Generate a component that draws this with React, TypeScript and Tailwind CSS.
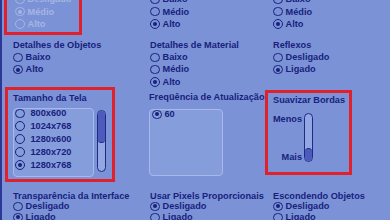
import React from "react"

const NAVY = "text-[#18217d]"

function Radio({ on = false, dim = false }: { on?: boolean; dim?: boolean }) {
  return (
    <span
      className={`flex h-[9.5px] w-[9.5px] shrink-0 items-center justify-center rounded-full border-[1.8px] ${
        dim ? "border-[#a7b5e4]" : "border-[#18217d]"
      }`}
    >
      {on && <span className={`h-[4px] w-[4px] rounded-full ${dim ? "bg-[#a7b5e4]" : "bg-[#18217d]"}`} />}
    </span>
  )
}

function Option({ label, on, dim, tight }: { label: string; on?: boolean; dim?: boolean; tight?: boolean }) {
  return (
    <div className={`flex items-center gap-[3px] ${tight ? "h-[11px]" : "h-[12.3px]"}`}>
      <Radio on={on} dim={dim} />
      <span className={dim ? "text-[#a7b5e4]" : NAVY}>{label}</span>
    </div>
  )
}

function Group({ title, options, selected, tight }: { title: string; options: string[]; selected: number; tight?: boolean }) {
  return (
    <div>
      <div className={`${tight ? "h-[11px]" : "h-[12.3px]"} leading-[12.3px] whitespace-nowrap`}>{title}</div>
      {options.map((o, i) => (
        <Option key={o} label={o} on={i === selected} tight={tight} />
      ))}
    </div>
  )
}

const resolutions = ["800x600", "1024x768", "1280x600", "1280x720", "1280x768"]

export default function App() {
  return (
    <div className="h-[220px] w-[390px] overflow-hidden border-l-2 border-[#2b3896] bg-[#7b93d6] font-['Liberation_Sans',Arial,sans-serif] text-[9.2px] font-bold leading-[12.3px] text-[#18217d]">
      <div className="-mt-[6.8px] pl-[11px]">
        {/* first row, half cut off */}
        <div className="grid grid-cols-[137px_123px_1fr]">
          <div className="-ml-[9px] -mt-[3px] w-[78px] border-[3px] border-[#e0202a] pb-[2px] pl-[8px]">
            <Option label="Desligado" dim />
            <Option label="Médio" on dim />
            <Option label="Alto" dim />
          </div>
          <div>
            <Option label="Baixo" />
            <Option label="Médio" />
            <Option label="Alto" on />
          </div>
          <div>
            <Option label="Baixo" />
            <Option label="Médio" />
            <Option label="Alto" on />
          </div>
        </div>

        <div className="mt-[3.75px] grid h-[48px] grid-cols-[137px_123px_1fr]">
          <Group title="Detalhes de Objetos" options={["Baixo", "Alto"]} selected={1} />
          <Group title="Detalhes de Material" options={["Baixo", "Médio", "Alto"]} selected={2} />
          <Group title="Reflexos" options={["Desligado", "Ligado"]} selected={1} />
        </div>

        <div className="grid h-[103px] grid-cols-[137px_123px_1fr] items-start">
          {/* Tamanho da Tela */}
          <div className="-ml-[8px] mt-[0.15px] w-[110px] border-[3px] border-[#e0202a] pb-[2px] pl-[5px] pr-[6px] pt-[1.85px]">
            <div className="h-[12.3px] whitespace-nowrap">Tamanho da Tela</div>
            <div className="mt-[3.85px] flex items-start">
              <div className="h-[69px] w-[81px] overflow-hidden rounded-[4px] border border-[#a9b8ea] bg-[#869ddc] pl-[1px]">
                <div className="-mt-[2px]">
                  {resolutions.map((r, i) => (
                    <div key={r} className="flex h-[12.85px] items-center gap-[6px]">
                      <Radio on={i === 4} />
                      <span>{r}</span>
                    </div>
                  ))}
                </div>
              </div>
              <div className="ml-[3px] mt-[2px] flex h-[62px] w-[9px] flex-col overflow-hidden rounded-full border-[1.5px] border-[#1e2a86] bg-[#93a7e2]">
                <div className="h-[32px] rounded-full border-b-[1.5px] border-[#1e2a86] bg-[#4d5cbc]" />
              </div>
            </div>
          </div>

          {/* Frequencia */}
          <div className="-ml-[1px] pt-[4px]">
            <div className="h-[12.3px] whitespace-nowrap">Freqüência de Atualização</div>
            <div className="mt-[5.85px] h-[67px] w-[74px] rounded-[4px] border border-[#a9b8ea] bg-[#869ddc] pl-[2px]">
              <div className="-mt-[2px] flex h-[12.85px] items-center gap-[3px]">
                <Radio on />
                <span>60</span>
              </div>
            </div>
          </div>

          {/* Suavizar Bordas */}
          <div className="-ml-[8px] mt-[3.15px] h-[85px] w-[87px] border-[3px] border-[#e0202a] pl-[5px] pt-[0.85px]">
            <div className="h-[12.3px] whitespace-nowrap">Suavizar Bordas</div>
            <div className="mt-[6.7px] flex items-start">
              <div className="flex h-[50px] w-[29px] flex-col items-end justify-between">
                <span>Menos</span>
                <span>Mais</span>
              </div>
              <div className="ml-[2px] flex h-[49px] w-[9px] flex-col justify-end overflow-hidden rounded-full border-[1.5px] border-[#1e2a86] bg-[#93a7e2]">
                <div className="h-[13px] rounded-full border-t-[1.5px] border-[#1e2a86] bg-[#4d5cbc]" />
              </div>
            </div>
          </div>
        </div>

        <div className="grid grid-cols-[137px_123px_1fr]">
          <Group title="Transparência da Interface" options={["Desligado", "Ligado"]} selected={1} tight />
          <Group title="Usar Pixels Proporcionais" options={["Desligado", "Ligado"]} selected={0} tight />
          <Group title="Escondendo Objetos" options={["Desligado", "Ligado"]} selected={0} tight />
        </div>
      </div>
    </div>
  )
}
